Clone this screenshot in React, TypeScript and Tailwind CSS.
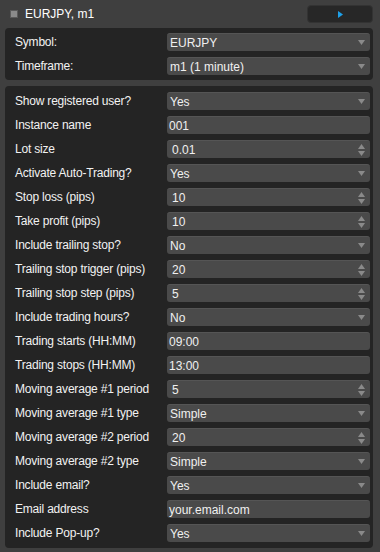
import React from 'react';

type Kind = 'select' | 'text' | 'number';

interface Field {
    label: string;
    value: string;
    kind: Kind;
}

const symbolFields: Field[] = [
    { label: 'Symbol:', value: 'EURJPY', kind: 'select' },
    { label: 'Timeframe:', value: 'm1 (1 minute)', kind: 'select' },
];

const settings: Field[] = [
    { label: 'Show registered user?', value: 'Yes', kind: 'select' },
    { label: 'Instance name', value: '001', kind: 'text' },
    { label: 'Lot size', value: '0.01', kind: 'number' },
    { label: 'Activate Auto-Trading?', value: 'Yes', kind: 'select' },
    { label: 'Stop loss (pips)', value: '10', kind: 'number' },
    { label: 'Take profit (pips)', value: '10', kind: 'number' },
    { label: 'Include trailing stop?', value: 'No', kind: 'select' },
    { label: 'Trailing stop trigger (pips)', value: '20', kind: 'number' },
    { label: 'Trailing stop step (pips)', value: '5', kind: 'number' },
    { label: 'Include trading hours?', value: 'No', kind: 'select' },
    { label: 'Trading starts (HH:MM)', value: '09:00', kind: 'text' },
    { label: 'Trading stops (HH:MM)', value: '13:00', kind: 'text' },
    { label: 'Moving average #1 period', value: '5', kind: 'number' },
    { label: 'Moving average #1 type', value: 'Simple', kind: 'select' },
    { label: 'Moving average #2 period', value: '20', kind: 'number' },
    { label: 'Moving average #2 type', value: 'Simple', kind: 'select' },
    { label: 'Include email?', value: 'Yes', kind: 'select' },
    { label: 'Email address', value: 'your.email.com', kind: 'text' },
    { label: 'Include Pop-up?', value: 'Yes', kind: 'select' },
];

const Control: React.FC<{ field: Field }> = ({ field }) => {
    const pad = field.kind === 'number' ? 'pl-[5px]' : field.kind === 'text' ? 'pl-[2px]' : 'pl-[3px]';
    return (
        <div className={`shrink-0 w-[203px] h-[18px] rounded-[3px] bg-[#4a4a4a] border-t border-[#555555] flex items-center justify-between ${pad} pr-[5px]`}>
            <span className="text-[12px] leading-none text-[#f0f0f0]">{field.value}</span>
            {field.kind === 'select' && (
                <svg width="7" height="5" viewBox="0 0 7 5"><path d="M0 0 L7 0 L3.5 5 Z" fill="#8a8a8a" /></svg>
            )}
            {field.kind === 'number' && (
                <div className="flex flex-col gap-[2px]">
                    <svg width="7" height="5" viewBox="0 0 7 5"><path d="M0 5 L7 5 L3.5 0 Z" fill="#8a8a8a" /></svg>
                    <svg width="7" height="5" viewBox="0 0 7 5"><path d="M0 0 L7 0 L3.5 5 Z" fill="#8a8a8a" /></svg>
                </div>
            )}
        </div>
    );
};

const Row: React.FC<{ field: Field }> = ({ field }) => (
    <div className="flex items-center justify-between h-[18px]">
        <span className="pl-[5px] text-[12px] tracking-[-0.2px] whitespace-nowrap text-[#f2f2f2]">{field.label}</span>
        <Control field={field} />
    </div>
);

const App: React.FC = () => {
    return (
        <div
            className="w-[380px] h-[552px] bg-[#3f3f3f] overflow-hidden"
            style={{ fontFamily: '"Liberation Sans", Arial, sans-serif' }}
        >
            {/* title bar */}
            <div className="h-[28px] flex items-center justify-between pl-[11px] pr-[7px]">
                <div className="flex items-center gap-[8px]">
                    <div className="w-[6px] h-[6px] bg-[#8a8a8a] outline outline-1 outline-[#5a5a5a]" />
                    <span className="text-[12px] text-white">EURJPY, m1</span>
                </div>
                <button className="w-[66px] h-[18px] rounded-[4px] bg-[#272727] border border-[#333333] flex items-center justify-center">
                    <svg width="5" height="7" viewBox="0 0 5 7"><path d="M0 0 L5 3.5 L0 7 Z" fill="#1ea0e8" /></svg>
                </button>
            </div>

            {/* symbol panel */}
            <div className="mx-[5px] mr-[7px] bg-[#242424] rounded-[4px] py-[5px] pl-[5px] pr-[3px] flex flex-col gap-[6px]">
                {symbolFields.map(f => <Row key={f.label} field={f} />)}
            </div>

            {/* parameters panel */}
            <div className="mt-[6px] mx-[5px] mr-[7px] bg-[#242424] rounded-[4px] py-[6px] pl-[5px] pr-[3px] flex flex-col gap-[6px]">
                {settings.map(f => <Row key={f.label} field={f} />)}
            </div>
        </div>
    );
};

export default App;
